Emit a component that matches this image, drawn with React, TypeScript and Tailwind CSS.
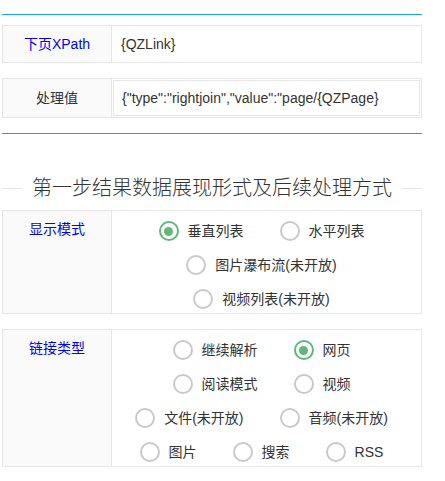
const font = "font-['Liberation_Sans','Noto_Sans_CJK_SC',sans-serif]";

type Opt = { label: string; checked?: boolean };

function Radio({ label, checked }: Opt) {
  return (
    <div className="flex h-[28px] items-center gap-[9px] pr-[10px]">
      <span
        className={
          checked
            ? "flex h-[20px] w-[20px] items-center justify-center rounded-full border-2 border-[#5fb878]"
            : "flex h-[20px] w-[20px] items-center justify-center rounded-full border-2 border-[#c9c9c9]"
        }
      >
        {checked && <span className="h-[9px] w-[9px] rounded-full bg-[#5fb878]" />}
      </span>
      <span className="text-[14px] leading-[20px] text-[#333]">{label}</span>
    </div>
  );
}

function Section({ title, options, className }: { title: string; options: Opt[]; className?: string }) {
  return (
    <div className={"flex w-[420px] border border-[#e6e6e6] " + (className ?? "")}>
      <div className="w-[109px] shrink-0 border-r border-[#e6e6e6] bg-[#fafafa] pt-[8px] text-center text-[14px] leading-[20px] text-[#0000ff]">
        {title}
      </div>
      <div className="flex flex-1 flex-wrap content-start justify-center gap-x-[26px] gap-y-[6px] px-[15px] pt-[6px]">
        {options.map((o) => (
          <Radio key={o.label} {...o} />
        ))}
      </div>
    </div>
  );
}

export default function App() {
  return (
    <div className={"min-h-[481px] bg-white pt-[14px] pl-[2px] " + font}>
      <div className="h-px w-[420px] bg-[#1e9fff]" />

      {/* next page xpath */}
      <div className="mt-[10px] flex h-[38px] w-[420px] border border-[#e6e6e6]">
        <div className="flex w-[109px] shrink-0 items-center justify-center border-r border-[#e6e6e6] bg-[#fafafa] text-[14px] text-[#0000ff]">
          下页XPath
        </div>
        <div className="flex flex-1 items-center pl-[9px] text-[14px] text-[#333]">{"{QZLink}"}</div>
      </div>

      {/* process value */}
      <div className="mt-[15px] flex h-[40px] w-[420px] border border-[#e6e6e6]">
        <div className="flex w-[109px] shrink-0 items-center justify-center border-r border-[#e6e6e6] bg-[#fafafa] text-[14px] text-[#333]">
          处理值
        </div>
        <div className="flex flex-1 p-px">
          <div className="flex flex-1 items-center overflow-hidden whitespace-nowrap border border-[#e6e6e6] pl-[8px] text-[14px] text-[#333]">
            {'{"type":"rightjoin","value":"page/{QZPage}'}
          </div>
        </div>
      </div>

      <div className="mt-[15px] h-px w-[420px] bg-[#3a93e8]" />

      {/* legend */}
      <div className="mt-[40px] flex w-[420px] items-center">
        <div className="h-px w-[20px] bg-[#e6e6e6]" />
        <div className="px-[10px] text-[20px] font-light leading-[28px] text-[#333]">
          第一步结果数据展现形式及后续处理方式
        </div>
        <div className="h-px flex-1 bg-[#e6e6e6]" />
      </div>

      <Section
        className="mt-[8px]"
        title="显示模式"
        options={[
          { label: "垂直列表", checked: true },
          { label: "水平列表" },
          { label: "图片瀑布流(未开放)" },
          { label: "视频列表(未开放)" },
        ]}
      />

      <Section
        className="mt-[15px]"
        title="链接类型"
        options={[
          { label: "继续解析" },
          { label: "网页", checked: true },
          { label: "阅读模式" },
          { label: "视频" },
          { label: "文件(未开放)" },
          { label: "音频(未开放)" },
          { label: "图片" },
          { label: "搜索" },
          { label: "RSS" },
        ]}
      />
    </div>
  );
}
